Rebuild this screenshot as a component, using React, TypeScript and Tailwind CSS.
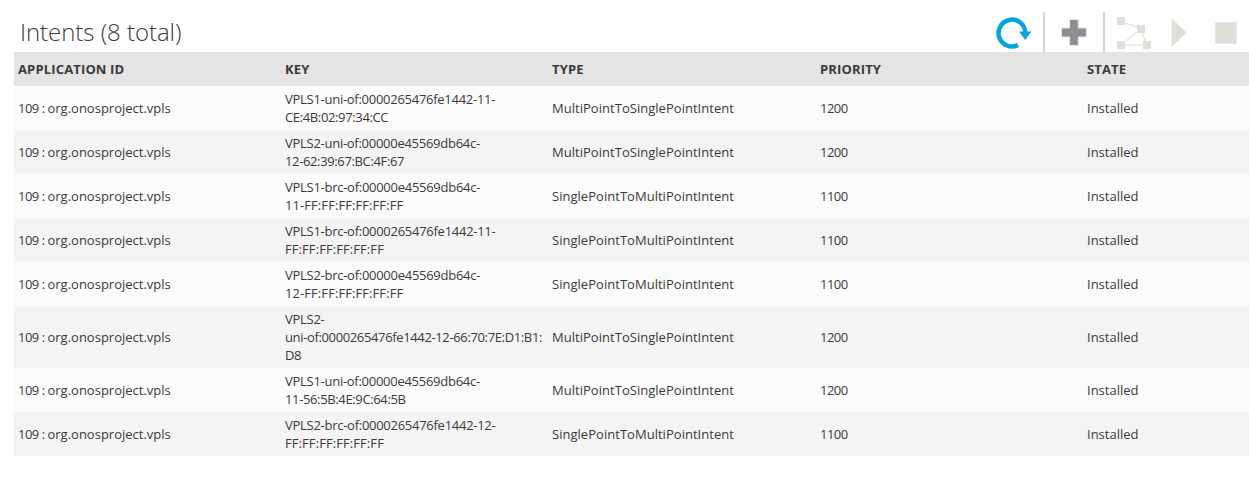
const rows = [
  [["VPLS1-uni-of:0000265476fe1442-11-", "CE:4B:02:97:34:CC"], "MultiPointToSinglePointIntent", "1200"],
  [["VPLS2-uni-of:00000e45569db64c-", "12-62:39:67:BC:4F:67"], "MultiPointToSinglePointIntent", "1200"],
  [["VPLS1-brc-of:00000e45569db64c-", "11-FF:FF:FF:FF:FF:FF"], "SinglePointToMultiPointIntent", "1100"],
  [["VPLS1-brc-of:0000265476fe1442-11-", "FF:FF:FF:FF:FF:FF"], "SinglePointToMultiPointIntent", "1100"],
  [["VPLS2-brc-of:00000e45569db64c-", "12-FF:FF:FF:FF:FF:FF"], "SinglePointToMultiPointIntent", "1100"],
  [["VPLS2-", "uni-of:0000265476fe1442-12-66:70:7E:D1:B1:", "D8"], "MultiPointToSinglePointIntent", "1200"],
  [["VPLS1-uni-of:00000e45569db64c-", "11-56:5B:4E:9C:64:5B"], "MultiPointToSinglePointIntent", "1200"],
  [["VPLS2-brc-of:0000265476fe1442-12-", "FF:FF:FF:FF:FF:FF"], "SinglePointToMultiPointIntent", "1100"],
] as [string[], string, string][];

const heads = ["APPLICATION ID", "KEY", "TYPE", "PRIORITY", "STATE"];

function lineClass(line: string) {
  if (line.includes("FF:FF")) return "tracking-[0.08px]";
  if (line.startsWith("VPLS")) return "tracking-[-0.27px]";
  return "tracking-[-0.36px]";
}

function Toolbar() {
  return (
    <div className="flex items-start h-[40px] mr-[12px]">
      <svg width="36" height="40" viewBox="0 0 36 40" className="mr-[11px]">
        <path d="M22 33 A13.4 13.4 0 1 1 29.3 20" fill="none" stroke="#04a5e0" strokeWidth="4.5" />
        <path d="M23 19.5 L35.5 19.5 L29.2 28 Z" fill="#04a5e0" />
      </svg>
      <div className="w-[2px] h-[41px] bg-[#d5d4cf] mr-[15px]" />
      <svg width="28" height="40" viewBox="0 0 28 40" className="mr-[15px]">
        <path d="M9.5 9 H18.5 V17.5 H27 V26.5 H18.5 V35 H9.5 V26.5 H1 V17.5 H9.5 Z" fill="#8f9095" stroke="#e8e8e6" strokeWidth="1" transform="translate(0.5 -1.5) scale(0.96 1)" />
      </svg>
      <div className="w-[2px] h-[41px] bg-[#d5d4cf] mr-[11px]" />
      <svg width="36" height="40" viewBox="0 0 36 40" className="mr-[19px]">
        <g stroke="#e8e7e0" strokeWidth="1.5" fill="none">
          <path d="M5 9 L25 17 L31 33 H5 L25 17" />
        </g>
        <g fill="#dfdfd7">
          <rect x="1" y="5" width="8" height="8" />
          <rect x="21" y="13" width="8" height="8" />
          <rect x="1" y="29" width="8" height="8" />
          <rect x="27" y="29" width="8" height="8" />
        </g>
      </svg>
      <svg width="16" height="40" viewBox="0 0 16 40" className="mr-[28px]">
        <path d="M0.5 6 L15.5 20.5 L0.5 35 Z" fill="#dfdfd7" />
      </svg>
      <div className="w-[22px] h-[22px] mt-[10px] bg-[#dfdfd7] border border-[#e9e9e4]" />
    </div>
  );
}

export default function App() {
  return (
    <div className="w-[1249px] h-[479px] bg-white overflow-hidden font-['Open_Sans',sans-serif] text-[#3c3a38]">
      <div className="h-[52px] pl-[20px] pt-[12px] flex justify-between">
        <h2 className="text-[24px] leading-[40px] font-light tracking-[-0.05px] text-[#3c3a38]">Intents (8 total)</h2>
        <Toolbar />
      </div>
      <div className="pl-[14px]">
        <table className="w-[1235px] table-fixed border-collapse text-[13px] leading-[18px]">
          <colgroup>
            <col className="w-[267px]" />
            <col className="w-[267px]" />
            <col className="w-[268px]" />
            <col className="w-[267px]" />
            <col className="w-[166px]" />
          </colgroup>
          <thead>
            <tr className="h-[34px] bg-[#e4e4e4]">
              {heads.map((h) => (
                <th key={h} className="px-[4px] text-left font-bold tracking-[0.15px]">{h}</th>
              ))}
            </tr>
          </thead>
          <tbody>
            {rows.map((r, i) => (
              <tr key={r[0][0] + r[0][1]} className={i % 2 === 0 ? "bg-[#fbfbfb]" : "bg-[#f4f4f4]"}>
                <td className="px-[4px] py-[4px]">
                  <span className="tracking-[-0.5px]">109 : </span>org.onosproject.vpls
                </td>
                <td className="px-[4px] py-[4px] whitespace-nowrap">
                  {r[0].map((line) => (
                    <div key={line} className={lineClass(line)}>{line}</div>
                  ))}
                </td>
                <td className="px-[4px] py-[4px] tracking-[0.03px]">{r[1]}</td>
                <td className="px-[4px] py-[4px] tracking-[-0.5px]">{r[2]}</td>
                <td className="px-[4px] py-[4px]">Installed</td>
              </tr>
            ))}
          </tbody>
        </table>
      </div>
    </div>
  );
}
